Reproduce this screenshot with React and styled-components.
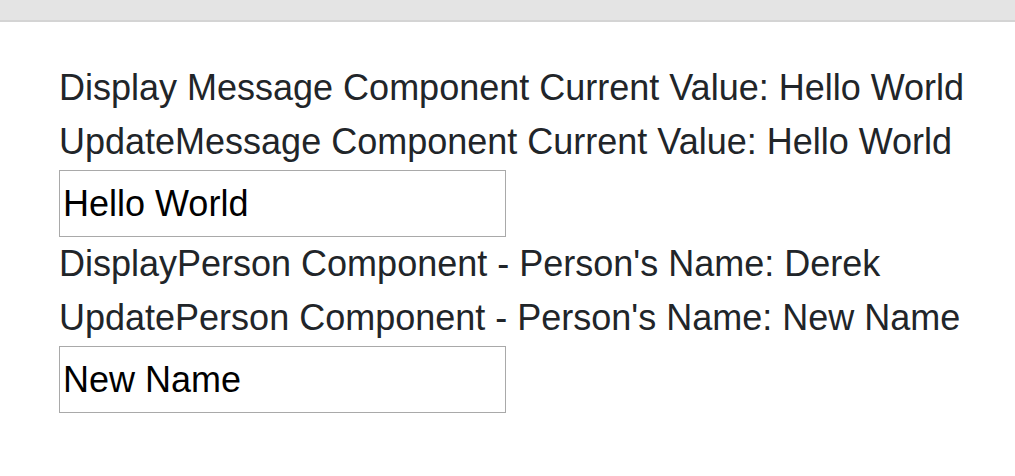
import React, { useState } from "react";
import styled, { createGlobalStyle } from "styled-components";

const GlobalStyle = createGlobalStyle`
  html, body { margin: 0; padding: 0; background: #ffffff; }
  body { font-family: "Liberation Sans", Arial, sans-serif; }
`;

const TopBar = styled.div`
  height: 20px;
  background: #e4e4e4;
  border-bottom: 2px solid #d4d4d4;
`;

const Content = styled.main`
  display: flex;
  flex-direction: column;
  align-items: flex-start;
  padding: 39px 0 0 59px;
`;

const Line = styled.div`
  font-size: 36px;
  line-height: 54px;
  color: #212529;
  white-space: nowrap;
`;

const TextInput = styled.input`
  box-sizing: border-box;
  width: 447px;
  height: 67px;
  margin: 1px 0 0;
  padding: 0 3px;
  border: 1px solid #a9a9a9;
  border-radius: 0;
  font-family: "Liberation Sans", Arial, sans-serif;
  font-size: 36px;
  color: #000000;
  background: #ffffff;
  outline: none;
`;

export default function App() {
  const [message, setMessage] = useState("Hello World");
  const [name, setName] = useState("New Name");
  return (
    <>
      <GlobalStyle />
      <TopBar />
      <Content>
        <Line>Display Message Component Current Value: {message}</Line>
        <Line>UpdateMessage Component Current Value: {message}</Line>
        <TextInput value={message} onChange={(e) => setMessage(e.target.value)} />
        <Line>DisplayPerson Component - Person's Name: Derek</Line>
        <Line>UpdatePerson Component - Person's Name: {name}</Line>
        <TextInput value={name} onChange={(e) => setName(e.target.value)} />
      </Content>
    </>
  );
}
